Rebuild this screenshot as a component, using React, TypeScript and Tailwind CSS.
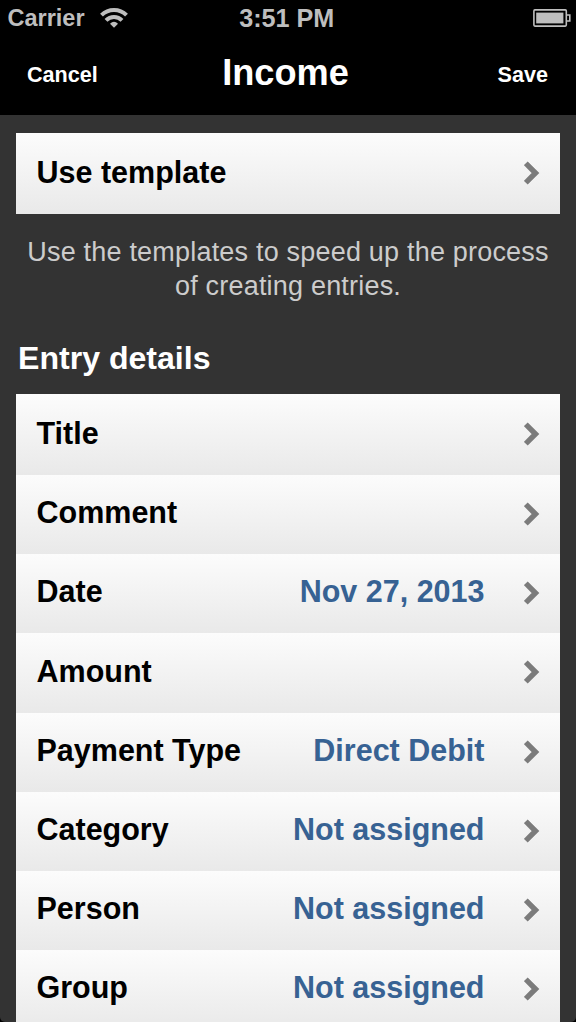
type Entry = { label: string; value?: string };

const entries: Entry[] = [
  { label: "Title" },
  { label: "Comment" },
  { label: "Date", value: "Nov 27, 2013" },
  { label: "Amount" },
  { label: "Payment Type", value: "Direct Debit" },
  { label: "Category", value: "Not assigned" },
  { label: "Person", value: "Not assigned" },
  { label: "Group", value: "Not assigned" },
];

function Chevron() {
  return (
    <svg className="mb-px h-6 w-4 shrink-0" viewBox="0 0 16 24" fill="none" stroke="#7b7b7b" strokeWidth="5.4">
      <path d="M1.8 2.3 L11.5 12 L1.8 21.7" />
    </svg>
  );
}

function Row({ label, value, first = false }: Entry & { first?: boolean }) {
  return (
    <button
      className={`flex w-full shrink-0 items-center bg-linear-to-b from-[#fcfcfc] to-[#e9e9e9] pr-5 pl-[20.5px] text-[30.5px] font-bold text-black ${
        first ? "h-[81px]" : "h-[79.2px]"
      }`}
    >
      <span className={`flex-1 text-left whitespace-nowrap ${first ? "pb-[2px]" : "pb-[3px]"}`}>{label}</span>
      <span className="mr-[39.5px] pb-[3px] whitespace-nowrap text-[#376293]">{value}</span>
      <Chevron />
    </button>
  );
}

function WifiIcon() {
  return (
    <svg className="mb-[2px] h-[22px] w-[30px]" viewBox="0 0 30 22" fill="none" stroke="#bebebe" strokeWidth="4">
      <path d="M2.5 9.2 A17.6 17.6 0 0 1 27.5 9.2" />
      <path d="M7 14.3 A11.3 11.3 0 0 1 23 14.3" />
      <path d="M11 17.8 Q15 13.8 19 17.8 L15 21.8 Z" fill="#bebebe" stroke="none" />
    </svg>
  );
}

function BatteryIcon() {
  return (
    <svg className="mb-px h-[18px] w-[38px]" viewBox="0 0 38 18" fill="none" stroke="#bebebe" strokeWidth="1.6">
      <rect x="0.9" y="0.9" width="32.4" height="16.2" rx="1" />
      <rect x="3.2" y="3.6" width="27.2" height="10.8" fill="#bebebe" stroke="none" />
      <path d="M33.4 6 H36.8 V12 H33.4" />
    </svg>
  );
}

export default function App() {
  return (
    <div className="flex h-[1022px] w-[576px] flex-col overflow-hidden bg-black font-['Liberation_Sans',Arial,sans-serif]">
      <div className="grid h-9 shrink-0 grid-cols-3 items-center pr-[5px] pl-[7.5px] text-[#bebebe]">
        <div className="flex items-center gap-[14px]">
          <span className="text-[23.5px] leading-9 font-bold">Carrier</span>
          <WifiIcon />
        </div>
        <span className="pr-[5px] text-center text-[25.2px] leading-9 font-bold whitespace-nowrap">3:51 PM</span>
        <div className="flex justify-end">
          <BatteryIcon />
        </div>
      </div>
      <header className="grid h-[79px] shrink-0 grid-cols-3 items-center px-[27px] pb-1 font-bold text-white">
        <button className="pt-[3px] text-left text-[21.6px]">Cancel</button>
        <h1 className="pr-[5px] text-center text-[36.2px]">Income</h1>
        <button className="pt-[3px] pr-px text-right text-[21.6px]">Save</button>
      </header>
      <main className="flex min-h-0 flex-1 flex-col overflow-hidden rounded-b-[5px] bg-[#333333] px-4 pt-[18px]">
        <Row label="Use template" first />
        <p className="-mx-2 mt-[21px] text-center text-[27px] leading-[34.2px] tracking-[0.2px] text-[#cccccc]">
          <span className="block whitespace-nowrap">Use the templates to speed up the process</span>
          <span className="block">of creating entries.</span>
        </p>
        <h2 className="mt-[37px] h-[53.6px] shrink-0 pl-[2px] text-[32.1px] leading-9 font-bold text-white">Entry details</h2>
        <div className="flex flex-col">
          {entries.map((entry, i) => (
            <Row key={entry.label} {...entry} first={i === 0} />
          ))}
        </div>
      </main>
    </div>
  );
}
